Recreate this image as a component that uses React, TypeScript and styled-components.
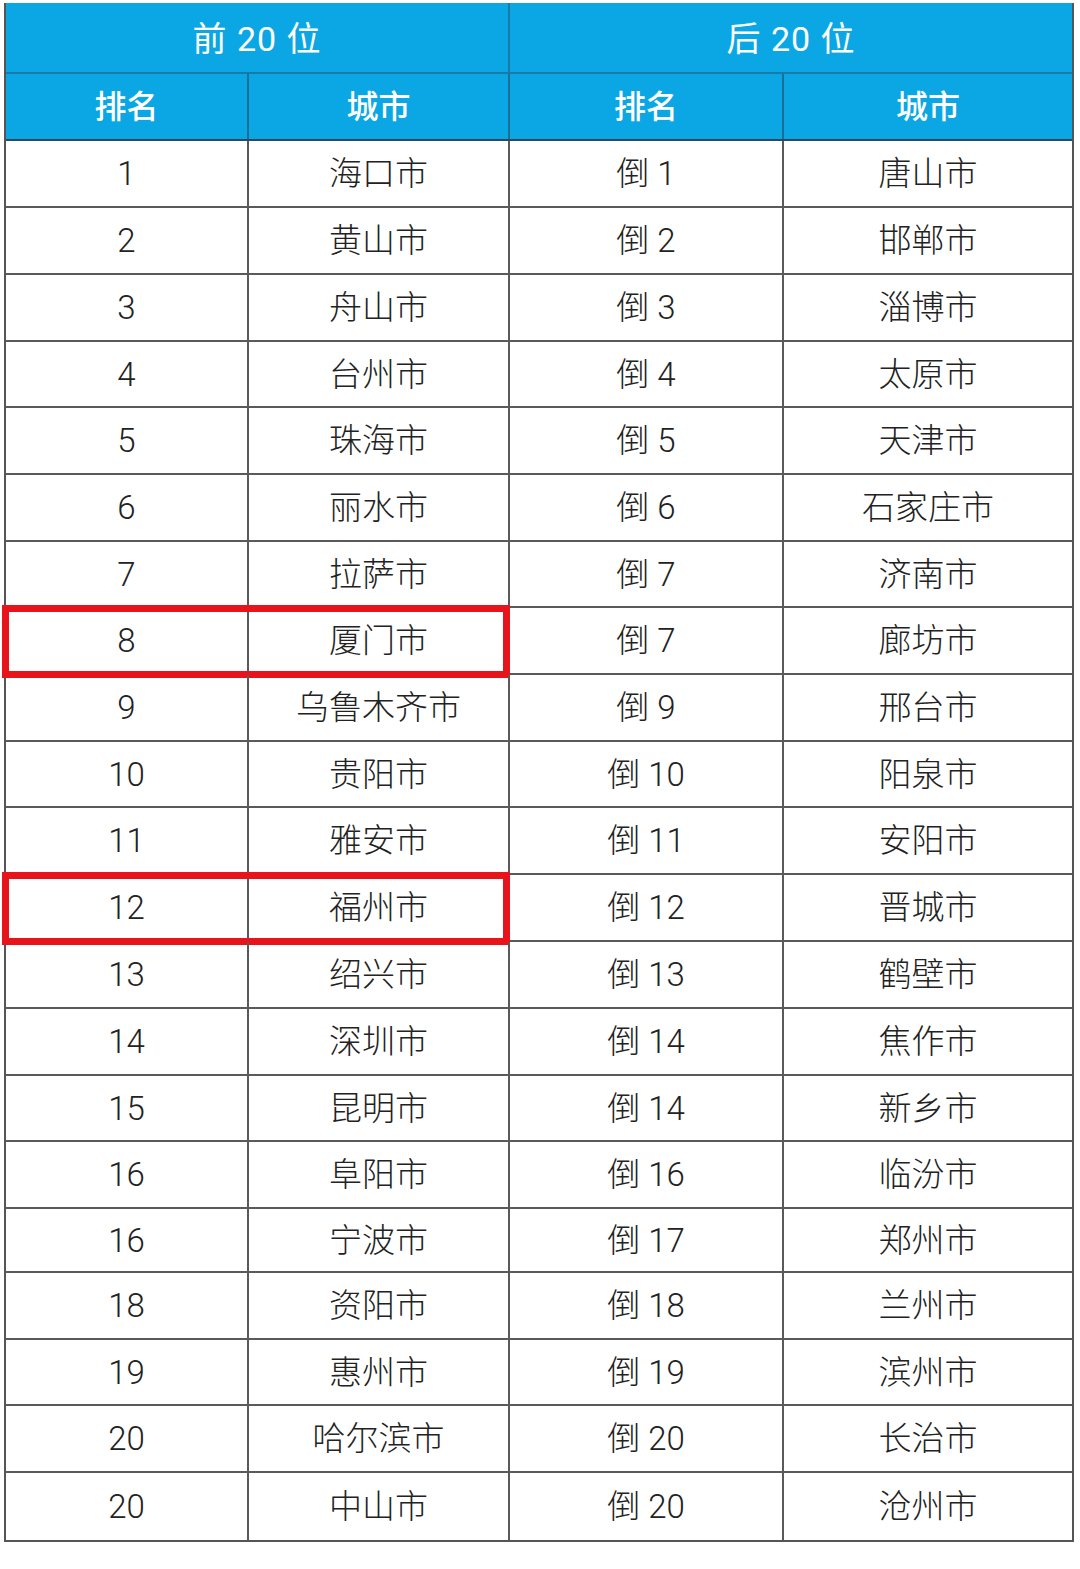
import React from 'react';
import styled, { createGlobalStyle } from 'styled-components';

const GlobalStyle = createGlobalStyle`
  html, body {
    margin: 0;
    padding: 0;
    background: #ffffff;
  }
  body {
    font-family: Roboto, "Noto Sans CJK SC", sans-serif;
  }
`;

const Page = styled.div`
  width: 1080px;
  height: 1569px;
  padding: 3px 6px 0 4px;
  box-sizing: border-box;
  background: #fff;
`;

const Table = styled.div`
  display: flex;
  flex-direction: column;
  border-left: 2px solid #555;
  border-right: 2px solid #555;
  border-bottom: 2px solid #555;
`;

const cols = '243px 261px 274px 1fr';

const TitleRow = styled.div`
  display: grid;
  grid-template-columns: 504px 1fr;
  height: 69px;
  background: #0aa7e4;
  border-bottom: 2px solid #1a79a8;
`;

const Title = styled.div<{ $last?: boolean }>`
  display: flex;
  align-items: center;
  justify-content: center;
  color: #fff;
  font-size: 34px;
  font-weight: 400;
  line-height: 1;
  letter-spacing: 1px;
  padding-top: 2px;
  border-right: ${(p) => (p.$last ? 'none' : '2px solid #1a79a8')};
`;

const HeadRow = styled.div`
  display: grid;
  grid-template-columns: ${cols};
  height: 65px;
  background: #0aa7e4;
  border-bottom: 2px solid #2b4b5c;
`;

const HeadCell = styled.div<{ $last?: boolean }>`
  display: flex;
  align-items: center;
  justify-content: center;
  color: #fff;
  font-size: 32px;
  line-height: 1;
  font-weight: 500;
  border-right: ${(p) => (p.$last ? 'none' : '2px solid #1a6f98')};
`;

const Row = styled.div<{ $h: number }>`
  position: relative;
  display: grid;
  grid-template-columns: ${cols};
  height: ${(p) => p.$h}px;
  border-bottom: 2px solid #5a5a5a;
  box-sizing: border-box;
  &:last-child {
    border-bottom: none;
  }
`;

const Cell = styled.div<{ $last?: boolean }>`
  display: flex;
  align-items: center;
  justify-content: center;
  color: #222;
  font-size: 33px;
  line-height: 1;
  font-weight: 300;
  border-right: ${(p) => (p.$last ? 'none' : '2px solid #5a5a5a')};
`;

const Highlight = styled.div`
  position: absolute;
  left: -4px;
  top: -3px;
  width: 508px;
  bottom: -5px;
  border: 7px solid #e8141b;
  box-sizing: border-box;
  pointer-events: none;
`;

type Item = { rank: string; city: string; back: string; backCity: string; mark?: boolean };

const data: Item[] = [
  { rank: '1', city: '海口市', back: '倒 1', backCity: '唐山市' },
  { rank: '2', city: '黄山市', back: '倒 2', backCity: '邯郸市' },
  { rank: '3', city: '舟山市', back: '倒 3', backCity: '淄博市' },
  { rank: '4', city: '台州市', back: '倒 4', backCity: '太原市' },
  { rank: '5', city: '珠海市', back: '倒 5', backCity: '天津市' },
  { rank: '6', city: '丽水市', back: '倒 6', backCity: '石家庄市' },
  { rank: '7', city: '拉萨市', back: '倒 7', backCity: '济南市' },
  { rank: '8', city: '厦门市', back: '倒 7', backCity: '廊坊市', mark: true },
  { rank: '9', city: '乌鲁木齐市', back: '倒 9', backCity: '邢台市' },
  { rank: '10', city: '贵阳市', back: '倒 10', backCity: '阳泉市' },
  { rank: '11', city: '雅安市', back: '倒 11', backCity: '安阳市' },
  { rank: '12', city: '福州市', back: '倒 12', backCity: '晋城市', mark: true },
  { rank: '13', city: '绍兴市', back: '倒 13', backCity: '鹤壁市' },
  { rank: '14', city: '深圳市', back: '倒 14', backCity: '焦作市' },
  { rank: '15', city: '昆明市', back: '倒 14', backCity: '新乡市' },
  { rank: '16', city: '阜阳市', back: '倒 16', backCity: '临汾市' },
  { rank: '16', city: '宁波市', back: '倒 17', backCity: '郑州市' },
  { rank: '18', city: '资阳市', back: '倒 18', backCity: '兰州市' },
  { rank: '19', city: '惠州市', back: '倒 19', backCity: '滨州市' },
  { rank: '20', city: '哈尔滨市', back: '倒 20', backCity: '长治市' },
  { rank: '20', city: '中山市', back: '倒 20', backCity: '沧州市' },
];

// row heights as measured, border included
const heights = [67, 67, 67, 66, 67, 67, 66, 67, 67, 66, 67, 67, 67, 67, 66, 67, 64, 67, 66, 67, 67];

const App: React.FC = () => {
  return (
    <Page>
      <GlobalStyle />
      <Table>
        <TitleRow>
          <Title>前 20 位</Title>
          <Title $last>后 20 位</Title>
        </TitleRow>
        <HeadRow>
          <HeadCell>排名</HeadCell>
          <HeadCell>城市</HeadCell>
          <HeadCell>排名</HeadCell>
          <HeadCell $last>城市</HeadCell>
        </HeadRow>
        {data.map((e, i) => (
          <Row key={i} $h={heights[i]}>
            <Cell>{e.rank}</Cell>
            <Cell>{e.city}</Cell>
            <Cell>{e.back}</Cell>
            <Cell $last>{e.backCity}</Cell>
            {e.mark && <Highlight />}
          </Row>
        ))}
      </Table>
    </Page>
  );
};

export default App;
